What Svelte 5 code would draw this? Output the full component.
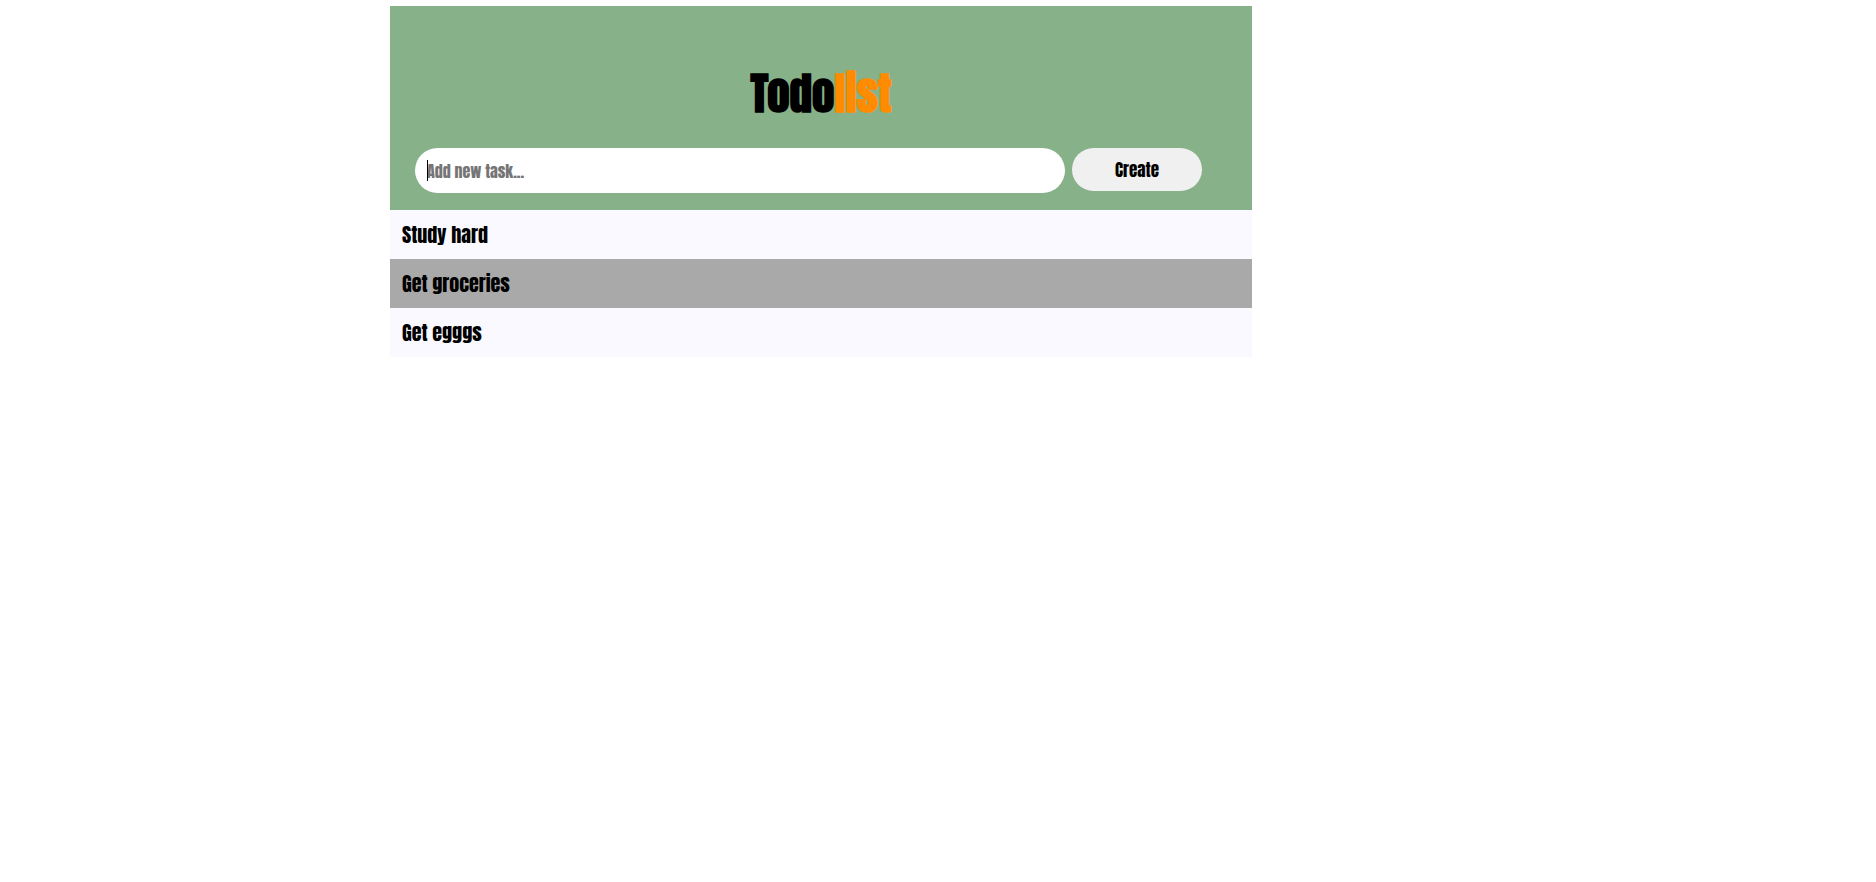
<script>
  let draft = $state('');
  let tasks = $state([
    { text: 'Study hard', done: false },
    { text: 'Get groceries', done: true },
    { text: 'Get egggs', done: false }
  ]);

  function create(event) {
    event.preventDefault();
    const text = draft.trim();
    if (!text) return;
    tasks.push({ text, done: false });
    draft = '';
  }
</script>

<main>
  <header>
    <h1>Todo<span>list</span></h1>
    <form onsubmit={create}>
      <div class="field">
        <input type="text" placeholder="Add new task..." aria-label="Add new task" bind:value={draft} />
        {#if !draft}<i class="caret"></i>{/if}
      </div>
      <button type="submit">Create</button>
    </form>
  </header>
  <ul>
    {#each tasks as task}
      <li class:done={task.done}>{task.text}</li>
    {/each}
  </ul>
</main>

<style>
  :global(body) {
    background: #fff;
  }

  main {
    box-sizing: border-box;
    width: calc(46% - 1px);
    margin-left: 390px;
    padding-top: 6px;
    font-family: Impact, Anton, 'Liberation Sans Narrow', 'Roboto Condensed', 'Open Sans Condensed', 'Liberation Sans', sans-serif;
    font-weight: 400;
    color: #000;
  }

  header {
    padding: 60px 50px 17px 25px;
    background: #87b189;
  }

  h1 {
    margin: 0 -25px 28px 0;
    font-size: 45px;
    font-weight: 700;
    line-height: 54px;
    text-align: center;
  }

  h1 span {
    color: #ff8c00;
  }

  form {
    display: flex;
    align-items: flex-start;
    gap: 7px;
  }

  .field {
    position: relative;
    flex: 0 1 650px;
  }

  input {
    display: block;
    box-sizing: border-box;
    width: 100%;
    height: 45px;
    padding: 0 12px;
    border: 0;
    border-radius: 23px;
    outline: 0;
    background: #fff;
    font: inherit;
    font-size: 16px;
  }

  input::placeholder {
    color: #757575;
    opacity: 1;
  }

  .caret {
    position: absolute;
    top: 12px;
    left: 12px;
    width: 1px;
    height: 21px;
    background: #000;
  }

  button {
    flex: 0 0 130px;
    height: 43px;
    padding: 0;
    border: 0;
    border-radius: 22px;
    background: #f0f0f0;
    color: #000;
    font: inherit;
    font-size: 17px;
  }

  ul {
    margin: 0;
    padding: 0;
    list-style: none;
  }

  li {
    padding: 12px;
    background: #f9f9ff;
    font-size: 20px;
    line-height: 25px;
  }

  li.done {
    background: #a9a9a9;
  }
</style>
